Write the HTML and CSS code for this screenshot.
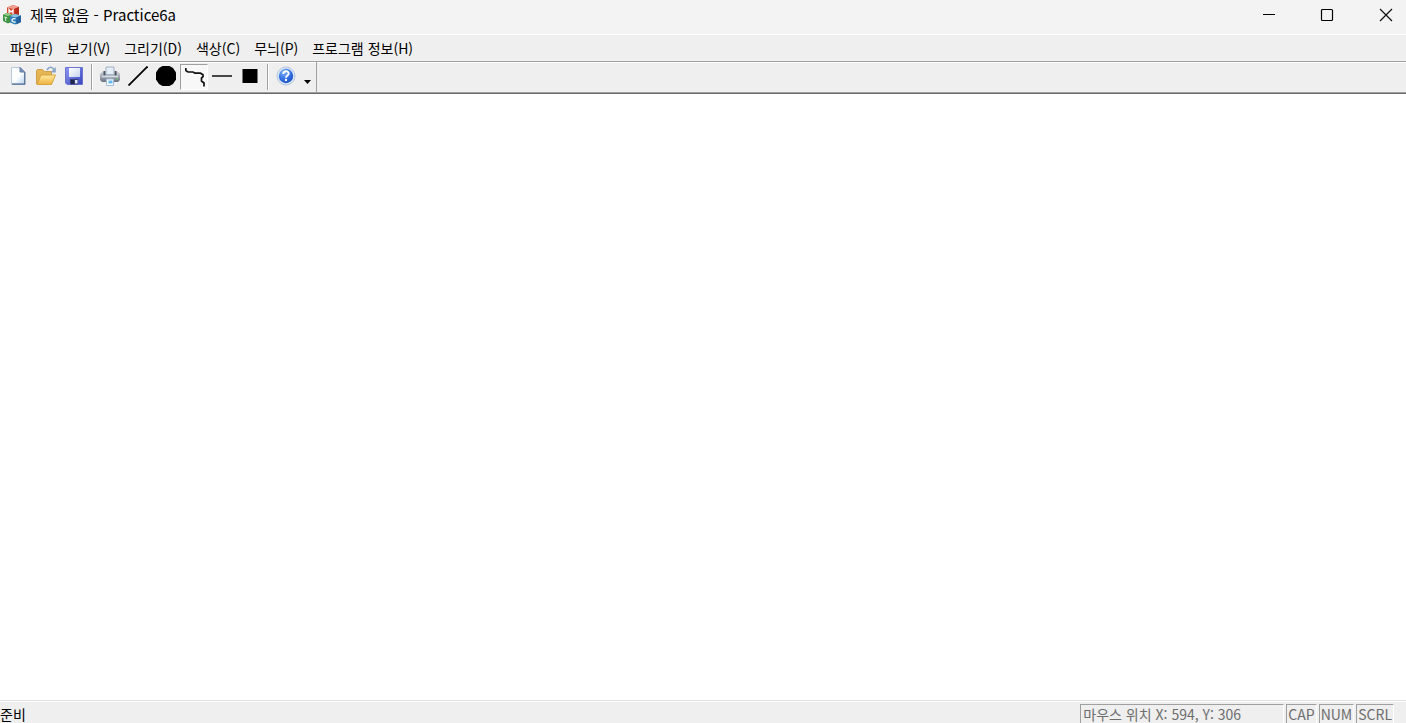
FILE: index.html
```html
<!DOCTYPE html>
<html lang="ko">
<head>
  <meta charset="UTF-8">
  <meta name="viewport" content="width=device-width, initial-scale=1.0">
  <title>제목 없음 - Practice6a</title>
  <link rel="stylesheet" href="styles.css">
</head>
<body>
  <header class="titlebar">
    <!-- MFC blocks -->
    <svg class="app-icon" width="20" height="20" viewBox="0 0 20 20" aria-hidden="true">
      <path d="M5 2.500l6-2.500 6 2v8l-6 2-6-2z" fill="#d8452f"/>
      <path d="M5 2.500l6-2.500 6 2-5.500 2z" fill="#f0a090"/>
      <path d="M12.500 4l4.500-2v8l-4.500 1.500z" fill="#b82c1e"/>
      <path d="M7 9v-4.500l2 2.500 2-2v4.500" fill="none" stroke="#fff" stroke-width="1.300"/>
      <path d="M1 9.500l4-1.500 5 1.500v7l-4 2-5-2.500z" fill="#3f9348"/>
      <path d="M1 9.500l4-1.500 5 1.500-4 1.500z" fill="#91ca82"/>
      <path d="M2.200 12l3 .8M3.700 12.500v3.500" fill="none" stroke="#dff5d8" stroke-width="1"/>
      <path d="M8 11l5-2 6 1.500v6.500l-6 2.500-5-2z" fill="#2f7fb6"/>
      <path d="M8 11l5-2 6 1.500-5.500 2z" fill="#8cc4e6"/>
      <path d="M14.500 12.500l4.500-2v6.500l-4.500 2.500z" fill="#235f9c"/>
      <path d="M13.500 14c-2-1-3.500 0-3.500 1.200s1.500 2.300 3.500 1.800" fill="none" stroke="#fff" stroke-width="1.300"/>
    </svg>
    <h1 class="title">제목 없음 - Practice6a</h1>
    <div class="window-controls">
      <button class="window-button" type="button" aria-label="최소화">
        <svg width="14" height="14" viewBox="0 0 14 14"><path d="M1 6.500h12" stroke="#000"/></svg>
      </button>
      <button class="window-button" type="button" aria-label="최대화">
        <svg width="14" height="14" viewBox="0 0 14 14"><rect x="1.500" y="1.500" width="11" height="11" rx="1" fill="none" stroke="#000" stroke-width="1.200"/></svg>
      </button>
      <button class="window-button" type="button" aria-label="닫기">
        <svg width="14" height="14" viewBox="0 0 14 14"><path d="M1 1l12 12M13 1L1 13" stroke="#111" stroke-width="1.200"/></svg>
      </button>
    </div>
  </header>

  <nav class="menubar">
    <button class="menu-item" type="button">파일(F)</button>
    <button class="menu-item" type="button">보기(V)</button>
    <button class="menu-item" type="button">그리기(D)</button>
    <button class="menu-item" type="button">색상(C)</button>
    <button class="menu-item" type="button">무늬(P)</button>
    <button class="menu-item" type="button">프로그램 정보(H)</button>
  </nav>

  <div class="toolbar-row">
    <div class="toolbar" role="toolbar">
      <button class="tool" type="button" aria-label="새로 만들기">
        <svg width="20" height="20" viewBox="0 0 20 20">
          <defs>
            <linearGradient id="paper" x1="0" y1="0" x2="1" y2="1"><stop offset="0" stop-color="#fff"/><stop offset=".55" stop-color="#fafdff"/><stop offset="1" stop-color="#b9d2ee"/></linearGradient>
          </defs>
          <path d="M3.500 1.500h9l4 4v12.500h-13z" fill="url(#paper)" stroke="#b9c8da"/>
          <path d="M16.800 6v12.200H4" fill="none" stroke="#4a6890" stroke-width="1.200"/>
          <path d="M12 1.500v4.500h4.500z" fill="#7895b8" stroke="#5f7ba2"/>
        </svg>
      </button>
      <button class="tool" type="button" aria-label="열기">
        <svg width="20" height="20" viewBox="0 0 20 20">
          <defs>
            <linearGradient id="folder" x1="0" y1="0" x2="0" y2="1"><stop offset="0" stop-color="#ffeaa0"/><stop offset="1" stop-color="#efb23c"/></linearGradient>
          </defs>
          <path d="M.5 18V4.500l1-1h5l2 2h7V18z" fill="#e4b552" stroke="#cfa04a"/>
          <path d="M1 18.500L5 9h14.500L15.500 18.500z" fill="url(#folder)" stroke="#d9a33c"/>
          <path d="M11 4c2-3.500 5-3.500 7-.5" fill="none" stroke="#8ba5c4" stroke-width="1.600"/>
          <path d="M19.800 1v5.500h-5.300z" fill="#8ba5c4"/>
        </svg>
      </button>
      <button class="tool" type="button" aria-label="저장">
        <svg width="20" height="20" viewBox="0 0 20 20">
          <defs>
            <linearGradient id="disk" x1="0" y1="0" x2="1" y2="1"><stop offset="0" stop-color="#9299f4"/><stop offset="1" stop-color="#3544bd"/></linearGradient>
            <linearGradient id="label" x1="0" y1="0" x2="1" y2="1"><stop offset="0" stop-color="#fff"/><stop offset="1" stop-color="#c5d3ee"/></linearGradient>
          </defs>
          <path d="M1.500 1.500h17v17H3l-1.500-1.500z" fill="url(#disk)" stroke="#6c73cf"/>
          <path d="M5 2h11v9H5z" fill="url(#label)"/>
          <path d="M6 13h8v5.500H6z" fill="#353b79"/>
          <path d="M11 14h2.500v3.500H11z" fill="#dce5fb"/>
          <path d="M7 14h3v4H7z" fill="#20254c"/>
        </svg>
      </button>
      <span class="separator"></span>
      <button class="tool" type="button" aria-label="인쇄">
        <svg width="20" height="20" viewBox="0 0 20 20">
          <defs>
            <linearGradient id="printer" x1="0" y1="0" x2="0" y2="1"><stop offset="0" stop-color="#d0d4da"/><stop offset=".45" stop-color="#a4abb6"/><stop offset="1" stop-color="#68717e"/></linearGradient>
          </defs>
          <path d="M2 5.500h16l2 2.500v6l-2 2H2l-2-2V8z" fill="url(#printer)"/>
          <path d="M3.500 5h2v4.500h-2zM14.500 5h2v4.500h-2z" fill="#4b535e"/>
          <path d="M6 1h8v7.500H6z" fill="#e4ecf6" stroke="#a3b2c6"/>
          <path d="M2 10.500h16" stroke="#d9dee5" stroke-width="1.500"/>
          <path d="M6.500 13h7v6.500h-7z" fill="#fafdff" stroke="#a3bad6"/>
          <path d="M8.500 14.500h4v3h-4z" fill="#68b9eb"/>
          <path d="M16 12.500h2v1h-2z" fill="#69c866"/>
        </svg>
      </button>
      <button class="tool" type="button" aria-label="직선">
        <svg width="20" height="20" viewBox="0 0 20 20"><path d="M.5 19.500l19-19" stroke="#000" stroke-width="1.800"/></svg>
      </button>
      <button class="tool" type="button" aria-label="타원">
        <svg width="20" height="20" viewBox="0 0 20 20"><path d="M6.500 0h7L17 2l3 4.500v7L17 18l-3.500 2h-7L3 18l-3-4.500v-7L3 2z" fill="#000"/></svg>
      </button>
      <button class="tool tool-pressed" type="button" aria-label="자유 곡선" aria-pressed="true">
        <svg width="20" height="20" viewBox="0 0 20 20"><path d="M.8 1v2.500L3 5h5l2 1.200h5.500l2.500 1.500v2L16.500 11v3l2.500 2v3.500" fill="none" stroke="#111" stroke-width="1.700"/></svg>
      </button>
      <button class="tool" type="button" aria-label="수평선">
        <svg width="20" height="20" viewBox="0 0 20 20"><path d="M0 10h20" stroke="#333" stroke-width="1.800"/></svg>
      </button>
      <button class="tool" type="button" aria-label="사각형">
        <svg width="20" height="20" viewBox="0 0 20 20"><path d="M2.500 3h15v14h-15z" fill="#000"/></svg>
      </button>
      <span class="separator"></span>
      <button class="tool" type="button" aria-label="도움말">
        <svg width="20" height="20" viewBox="0 0 20 20">
          <defs>
            <radialGradient id="help" cx=".35" cy=".25" r=".8"><stop offset="0" stop-color="#83b5fa"/><stop offset=".5" stop-color="#3978e5"/><stop offset="1" stop-color="#1d4fc5"/></radialGradient>
          </defs>
          <circle cx="10" cy="10" r="9" fill="#dbe7f7" stroke="#b4c6de"/>
          <circle cx="10" cy="10" r="7.200" fill="url(#help)"/>
          <path d="M7.300 8c0-3.800 5.400-3.500 5.400-.6 0 2-2.700 2-2.700 4.300" fill="none" stroke="#fff" stroke-width="1.900"/>
          <circle cx="10" cy="14" r="1.200" fill="#fff"/>
        </svg>
      </button>
      <button class="tool-more" type="button" aria-label="도구 모음 옵션">
        <svg width="7" height="4" viewBox="0 0 7 4"><path d="M0 0h7L3.500 4z" fill="#000"/></svg>
      </button>
    </div>
  </div>

  <main class="canvas"></main>

  <footer class="statusbar">
    <span class="status-message">준비</span>
    <span class="pane pane-position">마우스 위치 X: 594, Y: 306</span>
    <span class="pane">CAP</span>
    <span class="pane">NUM</span>
    <span class="pane">SCRL</span>
  </footer>
</body>
</html>
```

FILE: styles.css
```css
* {
  box-sizing: border-box;
}

body {
  margin: 0;
  height: 100vh;
  display: flex;
  flex-direction: column;
  overflow: hidden;
  background: #fff;
  color: #000;
  font-family: "Noto Sans CJK KR", sans-serif;
  font-size: 14px;
}

button {
  margin: 0;
  padding: 0;
  border: 0;
  background: transparent;
  color: inherit;
  font: inherit;
}

svg {
  display: block;
}

/* Title bar */
.titlebar {
  display: flex;
  align-items: center;
  height: 35px;
  padding: 0 0 4px 2px;
  background: #f3f3f3;
  border-bottom: 1px solid #fff;
}

.title {
  flex: 1;
  margin: 0 0 0 8px;
  font-size: 15px;
  line-height: 20px;
  font-weight: normal;
}

.window-controls {
  display: flex;
}

.window-button {
  display: flex;
  align-items: center;
  justify-content: center;
  width: 58px;
  height: 30px;
}

.window-button:last-child {
  width: 50px;
  padding-left: 9px;
}

.window-button:hover,
.menu-item:hover {
  background: #e5e5e5;
}

/* Menu bar */
.menubar {
  display: flex;
  height: 26px;
  padding: 0 3px;
  background: #efefef;
}

.menu-item {
  padding: 0 7px;
  line-height: 24px;
  white-space: nowrap;
}

/* Toolbar */
.toolbar-row {
  display: flex;
  height: 33px;
  background: #efefef;
  border-top: 1px solid #a0a0a0;
  border-bottom: 1px solid #696969;
  box-shadow: inset 0 -1px #a0a0a0, inset 0 1px #fff;
}

.toolbar {
  display: flex;
  align-items: flex-start;
  padding: 2px 0 0 4px;
  border-right: 1px solid #a0a0a0;
}

.tool {
  display: flex;
  align-items: center;
  justify-content: center;
  width: 28px;
  height: 26px;
  padding-bottom: 2px;
}

.tool-pressed {
  padding: 0 0 0 2px;
  background: #f8f8f8;
  border: 1px solid #fff;
  border-top-color: #a0a0a0;
  border-left-color: #a0a0a0;
}

.separator {
  width: 2px;
  height: 26px;
  margin: 0 3px;
  background: #fff;
  border-left: 1px solid #a0a0a0;
}

.tool-more {
  display: flex;
  align-items: flex-end;
  justify-content: center;
  width: 16px;
  height: 26px;
  padding: 0 1px 6px 0;
}

/* Drawing area */
.canvas {
  flex: 1;
  background: #fff;
}

/* Status bar */
.statusbar {
  display: flex;
  gap: 2px;
  height: 23px;
  padding: 3px 12px 0 0;
  background: #efefef;
  border-top: 1px solid #e3e3e3;
  box-shadow: inset 0 1px #fff;
  line-height: 18px;
  white-space: nowrap;
}

.status-message {
  flex: 1;
  padding-top: 1px;
}

.pane {
  padding: 0 1px;
  border-top: 1px solid #a0a0a0;
  border-left: 1px solid #a0a0a0;
  border-right: 1px solid #fff;
  color: #6d6d6d;
}

.pane-position {
  width: 204px;
  padding-left: 2px;
}
```
